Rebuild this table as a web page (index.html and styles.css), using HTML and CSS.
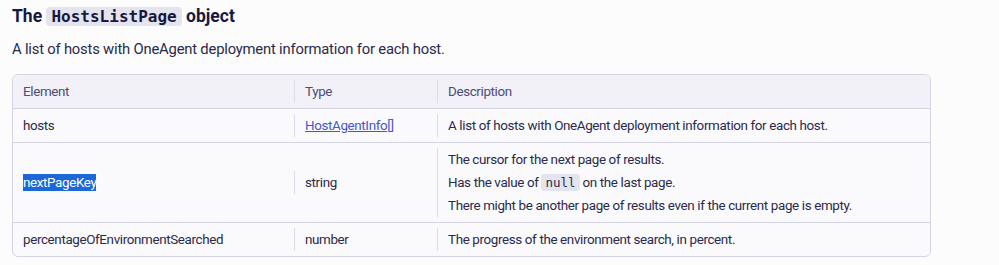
FILE: index.html
```html
<!DOCTYPE html>
<html lang="en">
<head>
    <meta charset="UTF-8">
    <title>HostsListPage</title>
    <link rel="stylesheet" href="styles.css">
</head>
<body>
    <section class="object-doc">
        <h3 class="object-title">The <code>HostsListPage</code> object</h3>
        <p class="object-intro">A list of hosts with OneAgent deployment information for each host.</p>
        <div class="table-wrap">
            <table class="fields">
                <thead>
                    <tr>
                        <th class="col-element"><div class="cell">Element</div></th>
                        <th class="col-type"><div class="cell sep">Type</div></th>
                        <th><div class="cell sep">Description</div></th>
                    </tr>
                </thead>
                <tbody>
                    <tr>
                        <td><div class="cell">hosts</div></td>
                        <td><div class="cell sep"><a href="#">HostAgentInfo[]</a></div></td>
                        <td><div class="cell sep">A list of hosts with OneAgent deployment information for each host.</div></td>
                    </tr>
                    <tr>
                        <td><div class="cell"><span class="selected">nextPageKey</span></div></td>
                        <td><div class="cell sep">string</div></td>
                        <td>
                            <div class="cell sep">
                                <p>The cursor for the next page of results.</p>
                                <p>Has the value of <code>null</code> on the last page.</p>
                                <p>There might be another page of results even if the current page is empty.</p>
                            </div>
                        </td>
                    </tr>
                    <tr>
                        <td><div class="cell">percentageOfEnvironmentSearched</div></td>
                        <td><div class="cell sep">number</div></td>
                        <td><div class="cell sep">The progress of the environment search, in percent.</div></td>
                    </tr>
                </tbody>
            </table>
        </div>
    </section>
</body>
</html>
```

FILE: styles.css
```css
:root {
    --text-color: #2a2a4c;
    --title-color: #18183f;
    --head-color: #4c4c78;
    --border-color: #d4d4e6;
    --line-color: #dcdcea;
    --head-bg: #f1f1f7;
    --row-bg: #fafafc;
    --code-bg: #e4e4ef;
    --link-color: #4556d0;
}

body {
    margin: 0;
    padding: 0 12px;
    background-color: #fcfcfd;
    color: var(--text-color);
    font-family: Roboto, 'Liberation Sans', sans-serif;
}

.object-title {
    margin: 6px 0 0;
    font-size: 17.5px;
    line-height: 20px;
    font-weight: 700;
    color: var(--title-color);
}

.object-title code {
    font-family: 'DejaVu Sans Mono', monospace;
    font-size: 16px;
    background-color: var(--code-bg);
    padding: 0 5px;
    border-radius: 4px;
}

.object-intro {
    margin: 13px 0 0;
    font-size: 14.8px;
    line-height: 18px;
    letter-spacing: -0.2px;
}

.table-wrap {
    margin-top: 16px;
    width: 917px;
    border: 1px solid var(--border-color);
    border-radius: 6px;
    overflow: hidden;
    background-color: var(--row-bg);
}

.fields {
    width: 100%;
    border-collapse: collapse;
    font-size: 13.4px;
    letter-spacing: -0.36px;
}

.fields th {
    background-color: var(--head-bg);
    color: var(--head-color);
    font-weight: 400;
    text-align: left;
}

.fields th,
.fields td {
    padding: 5px 0;
    vertical-align: middle;
}

.fields td {
    border-top: 1px solid var(--border-color);
}

.col-element {
    width: 281px;
}

.col-type {
    width: 143px;
}

.cell {
    padding: 4px 10px;
    line-height: 15px;
}

.cell.sep {
    border-left: 1px solid var(--line-color);
}

.cell p {
    margin: 0;
}

.cell p + p {
    margin-top: 8px;
}

.cell code {
    font-family: 'DejaVu Sans Mono', monospace;
    font-size: 12.5px;
    letter-spacing: 0;
    background-color: var(--code-bg);
    padding: 1px 4px;
    border-radius: 3px;
}

.fields a {
    color: var(--link-color);
}

.selected {
    background-color: #1b68d6;
    color: #fff;
    padding: 1px 0;
}
```
